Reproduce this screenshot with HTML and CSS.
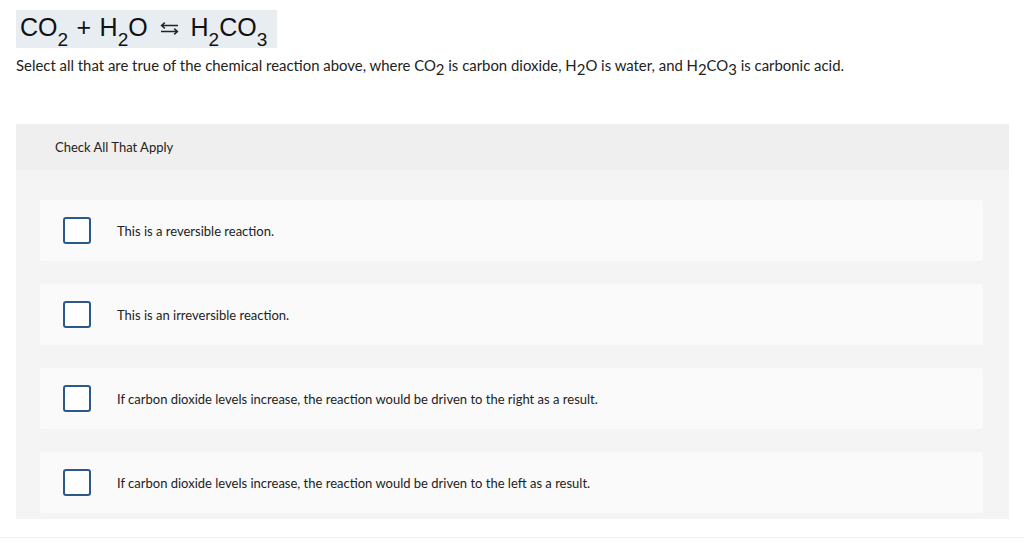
FILE: index.html
```html
<!DOCTYPE html>
<html>
<head>
<meta charset="utf-8">
<link rel="stylesheet" href="styles.css">
</head>
<body>
<div class="question">
  <div class="equation">CO<sub>2</sub> + H<sub>2</sub>O <svg class="arrows" width="19" height="13" viewBox="0 0 19 13"><path d="M1.5 3.5H18M4.8 0.6L1.5 3.5L4.8 6.4M17.5 9.5H1M14.2 6.6L17.5 9.5L14.2 12.4" fill="none" stroke="#222" stroke-width="1.4"/></svg> H<sub>2</sub>CO<sub>3</sub></div>
  <p class="prompt">Select all that are true of the chemical reaction above, where CO<span class="sub">2</span> is carbon dioxide, H<span class="sub">2</span>O is water, and H<span class="sub">2</span>CO<span class="sub">3</span> is carbonic acid.</p>
  <section class="panel">
    <header class="panel-head">Check All That Apply</header>
    <div class="options">
      <label class="option"><span class="box"></span><span class="text">This is a reversible reaction.</span></label>
      <label class="option"><span class="box"></span><span class="text">This is an irreversible reaction.</span></label>
      <label class="option"><span class="box"></span><span class="text">If carbon dioxide levels increase, the reaction would be driven to the right as a result.</span></label>
      <label class="option"><span class="box"></span><span class="text">If carbon dioxide levels increase, the reaction would be driven to the left as a result.</span></label>
    </div>
  </section>
  <div class="rule"></div>
</div>
</body>
</html>
```
FILE: styles.css
```css
html, body {
  margin: 0;
  padding: 0;
  background: #fff;
}
body {
  font-family: "Lato", "Liberation Sans", sans-serif;
  color: #222;
}
.question {
  padding-top: 10px;
}
.equation {
  display: inline-block;
  vertical-align: top;
  margin-left: 16px;
  height: 38px;
  width: 261px;
  box-sizing: border-box;
  padding-left: 4px;
  background: #e8edf2;
  font-family: "Liberation Sans", Arial, sans-serif;
  font-size: 25px;
  line-height: 34px;
  color: #111;
  white-space: pre;
  word-spacing: 1.5px;
}
.equation sub {
  font-size: 19px;
  vertical-align: -10px;
  line-height: 0;
}
.arrows {
  vertical-align: 1px;
  margin: 0 3px 0 4px;
}
.prompt {
  margin: 8px 0 0 16px;
  font-size: 14.9px;
  line-height: 18px;
  color: #222;
}
.prompt .sub {
  vertical-align: -4px;
  font-size: 14.9px;
  line-height: 0;
}
.panel {
  margin: 50px 15px 0 16px;
  background: #f4f4f4;
  padding-bottom: 6px;
}
.panel-head {
  height: 46px;
  background: #efefef;
  display: flex;
  align-items: center;
  padding-left: 39px;
  font-size: 13px;
  color: #222;
}
.options {
  display: flex;
  flex-direction: column;
  gap: 23px;
  padding: 30px 26px 0 24px;
}
.option {
  display: flex;
  align-items: center;
  height: 61px;
  background: #fafafa;
  border-radius: 3px;
  padding-left: 23px;
}
.box {
  width: 28px;
  height: 27px;
  box-sizing: border-box;
  border: 2px solid #2b5a8a;
  border-radius: 3px;
  background: #fff;
  flex: none;
}
.text {
  margin-left: 26px;
  font-size: 13px;
  color: #222;
}
.rule {
  margin-top: 18px;
  height: 1px;
  background: #efefef;
}
```
